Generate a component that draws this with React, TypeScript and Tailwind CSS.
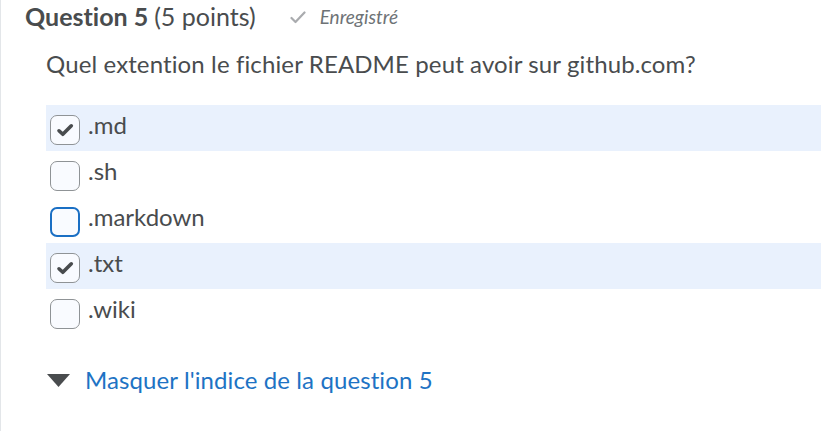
import { useState } from "react";

const options = [
  { label: ".md", checked: true },
  { label: ".sh", checked: false },
  { label: ".markdown", checked: false, focused: true },
  { label: ".txt", checked: true },
  { label: ".wiki", checked: false },
];

const CheckMark = () => (
  <svg width="18" height="14" viewBox="0 0 18 14" fill="none">
    <path
      d="M3 7.8 L6.8 11.3 L15.3 2.8"
      stroke="#494c4e"
      strokeWidth="3.6"
      strokeLinecap="round"
      strokeLinejoin="round"
    />
  </svg>
);

const App = () => {
  const [hintOpen, setHintOpen] = useState(true);

  return (
    <div
      className="w-[821px] h-[431px] bg-white border-l border-[#e3e6e9] text-[#494c4e] overflow-hidden [font-variant-ligatures:none]"
      style={{ fontFamily: "Lato, 'Open Sans', sans-serif" }}
    >
      <div className="flex items-center h-[34px] pl-[24px]">
        <span className="text-[25px] font-bold">Question 5</span>
        <span className="text-[25px] ml-[6px]">(5 points)</span>
        <span className="flex items-center ml-[34px] text-[#6e7376]">
          <svg width="16" height="13" viewBox="0 0 16 13" fill="none">
            <path
              d="M1.5 7 L5.5 11 L14.5 1.5"
              stroke="#a9abae"
              strokeWidth="2.2"
              strokeLinecap="round"
              strokeLinejoin="round"
            />
          </svg>
          <span className="italic text-[19px] ml-[14px]">Enregistré</span>
        </span>
      </div>

      <div className="pl-[45px] pt-[14px] pb-[25px] text-[24px] leading-[32px] tracking-[0.12px]">
        Quel extention le fichier README peut avoir sur github.com?
      </div>

      <div className="ml-[45px]">
        {options.map((o) => (
          <label
            key={o.label}
            className={`flex items-center h-[46px] pl-[4px] ${o.checked ? "bg-[#e9f1fd]" : ""}`}
          >
            <span
              className={`flex items-center justify-center w-[30px] h-[30px] rounded-[7px] bg-[#f9fbff] mt-[4px] ${
                o.focused ? "border-2 border-[#1a6fc4]" : "border border-[#8f9396]"
              }`}
            >
              {o.checked && <CheckMark />}
            </span>
            <span className="ml-[8px] text-[24px] -mt-[6px]">{o.label}</span>
          </label>
        ))}
      </div>

      <button
        onClick={() => setHintOpen(!hintOpen)}
        className="flex items-center ml-[46px] mt-[27px] text-[24px] tracking-[0.1px] text-[#1e73c4]"
      >
        <svg width="23" height="13" viewBox="0 0 23 13">
          <path d="M0 0 H23 L11.5 13 Z" fill="#494c4e" />
        </svg>
        <span className="ml-[15px]">Masquer l'indice de la question 5</span>
      </button>
    </div>
  );
};

export default App;
